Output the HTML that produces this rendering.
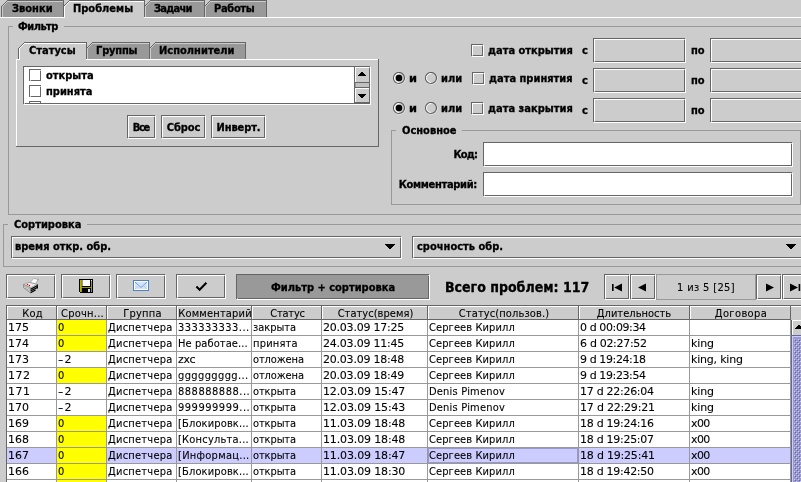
<!DOCTYPE html><html><head><meta charset="utf-8"><title>Проблемы</title><style>html,body{margin:0;padding:0;overflow:hidden;}body{width:801px;height:482px;overflow:hidden;background:#ccc;position:relative;font-family:"DejaVu Sans Condensed","Liberation Sans",sans-serif;font-size:11px;font-weight:bold;color:#000;}.t{position:absolute;white-space:nowrap;overflow:visible;will-change:transform;-webkit-text-stroke:0.3px #000;}.r{position:absolute;}.c{position:absolute;white-space:nowrap;overflow:hidden;will-change:transform;-webkit-text-stroke:0.1px #000;font-weight:normal;font-size:11px;line-height:13px;height:13px;}</style></head><body>
<div class="r" style="left:0px;top:17px;width:801px;height:1px;background:#fff;"></div>
<div class="r" style="left:2px;top:16px;width:265px;height:1px;background:#8a8a8a;"></div>
<svg class="r" style="left:0px;top:0px" width="268" height="18" viewBox="0 0 268 18" shape-rendering="crispEdges"><polygon points="1,7 8,0 64,0 64,17 1,17" fill="#999"/><polygon points="63,7 70,0 145,0 145,17 63,17" fill="#ccc"/><polygon points="144,7 151,0 205,0 205,17 144,17" fill="#999"/><polygon points="204,7 211,0 267,0 267,17 204,17" fill="#999"/><rect x="1" y="6" width="1" height="11" fill="#666"/><rect x="2" y="5" width="1" height="1" fill="#666"/><rect x="3" y="4" width="1" height="1" fill="#666"/><rect x="4" y="3" width="1" height="1" fill="#666"/><rect x="5" y="2" width="1" height="1" fill="#666"/><rect x="6" y="1" width="1" height="1" fill="#666"/><rect x="7" y="0" width="1" height="1" fill="#666"/><rect x="8" y="0" width="56" height="1" fill="#666"/><rect x="63" y="0" width="1" height="17" fill="#666"/><rect x="2" y="6" width="1" height="11" fill="#ccc"/><rect x="3" y="5" width="1" height="1" fill="#ccc"/><rect x="4" y="4" width="1" height="1" fill="#ccc"/><rect x="5" y="3" width="1" height="1" fill="#ccc"/><rect x="6" y="2" width="1" height="1" fill="#ccc"/><rect x="7" y="1" width="1" height="1" fill="#ccc"/><rect x="8" y="1" width="55" height="1" fill="#ccc"/><rect x="63" y="6" width="1" height="11" fill="#666"/><rect x="64" y="5" width="1" height="1" fill="#666"/><rect x="65" y="4" width="1" height="1" fill="#666"/><rect x="66" y="3" width="1" height="1" fill="#666"/><rect x="67" y="2" width="1" height="1" fill="#666"/><rect x="68" y="1" width="1" height="1" fill="#666"/><rect x="69" y="0" width="1" height="1" fill="#666"/><rect x="70" y="0" width="75" height="1" fill="#666"/><rect x="144" y="0" width="1" height="17" fill="#666"/><rect x="64" y="6" width="1" height="11" fill="#fff"/><rect x="65" y="5" width="1" height="1" fill="#fff"/><rect x="66" y="4" width="1" height="1" fill="#fff"/><rect x="67" y="3" width="1" height="1" fill="#fff"/><rect x="68" y="2" width="1" height="1" fill="#fff"/><rect x="69" y="1" width="1" height="1" fill="#fff"/><rect x="70" y="1" width="74" height="1" fill="#fff"/><rect x="144" y="6" width="1" height="11" fill="#666"/><rect x="145" y="5" width="1" height="1" fill="#666"/><rect x="146" y="4" width="1" height="1" fill="#666"/><rect x="147" y="3" width="1" height="1" fill="#666"/><rect x="148" y="2" width="1" height="1" fill="#666"/><rect x="149" y="1" width="1" height="1" fill="#666"/><rect x="150" y="0" width="1" height="1" fill="#666"/><rect x="151" y="0" width="54" height="1" fill="#666"/><rect x="204" y="0" width="1" height="17" fill="#666"/><rect x="145" y="6" width="1" height="11" fill="#ccc"/><rect x="146" y="5" width="1" height="1" fill="#ccc"/><rect x="147" y="4" width="1" height="1" fill="#ccc"/><rect x="148" y="3" width="1" height="1" fill="#ccc"/><rect x="149" y="2" width="1" height="1" fill="#ccc"/><rect x="150" y="1" width="1" height="1" fill="#ccc"/><rect x="151" y="1" width="53" height="1" fill="#ccc"/><rect x="204" y="6" width="1" height="11" fill="#666"/><rect x="205" y="5" width="1" height="1" fill="#666"/><rect x="206" y="4" width="1" height="1" fill="#666"/><rect x="207" y="3" width="1" height="1" fill="#666"/><rect x="208" y="2" width="1" height="1" fill="#666"/><rect x="209" y="1" width="1" height="1" fill="#666"/><rect x="210" y="0" width="1" height="1" fill="#666"/><rect x="211" y="0" width="56" height="1" fill="#666"/><rect x="266" y="0" width="1" height="17" fill="#666"/><rect x="205" y="6" width="1" height="11" fill="#ccc"/><rect x="206" y="5" width="1" height="1" fill="#ccc"/><rect x="207" y="4" width="1" height="1" fill="#ccc"/><rect x="208" y="3" width="1" height="1" fill="#ccc"/><rect x="209" y="2" width="1" height="1" fill="#ccc"/><rect x="210" y="1" width="1" height="1" fill="#ccc"/><rect x="211" y="1" width="55" height="1" fill="#ccc"/></svg>
<div class="t" style="left:12px;top:2px;font-size:11px;line-height:13px;height:13px;">Звонки</div>
<div class="t" style="left:73px;top:2px;font-size:11px;line-height:13px;height:13px;">Проблемы</div>
<div class="t" style="left:154px;top:2px;font-size:11px;line-height:13px;height:13px;letter-spacing:-0.71px;">Задачи</div>
<div class="t" style="left:214px;top:2px;font-size:11px;line-height:13px;height:13px;letter-spacing:-0.32px;">Работы</div>
<div class="r" style="left:64px;top:16px;width:80px;height:2px;background:#ccc;"></div>
<div class="r" style="left:64px;top:6px;width:1px;height:12px;background:#fff;"></div>
<div class="r" style="left:8px;top:26px;width:803px;height:189px;box-sizing:border-box;border:1px solid #999;"></div>
<div class="r" style="left:13px;top:26px;width:51px;height:1px;background:#ccc;"></div>
<div class="t" style="left:18px;top:20px;font-size:11px;line-height:13px;height:13px;letter-spacing:-0.54px;">Фильтр</div>
<div class="r" style="left:16px;top:59px;width:363px;height:1px;background:#fff;"></div>
<div class="r" style="left:16px;top:59px;width:1px;height:88px;background:#fff;"></div>
<div class="r" style="left:378px;top:59px;width:1px;height:88px;background:#666;"></div>
<div class="r" style="left:16px;top:146px;width:363px;height:1px;background:#666;"></div>
<svg class="r" style="left:17px;top:42px" width="230" height="18" viewBox="17 42 230 18" shape-rendering="crispEdges"><polygon points="18,49 25,42 87,42 87,59 18,59" fill="#ccc"/><polygon points="86,49 93,42 150,42 150,59 86,59" fill="#999"/><polygon points="149,49 156,42 246,42 246,59 149,59" fill="#999"/><rect x="18" y="48" width="1" height="11" fill="#666"/><rect x="19" y="47" width="1" height="1" fill="#666"/><rect x="20" y="46" width="1" height="1" fill="#666"/><rect x="21" y="45" width="1" height="1" fill="#666"/><rect x="22" y="44" width="1" height="1" fill="#666"/><rect x="23" y="43" width="1" height="1" fill="#666"/><rect x="24" y="42" width="1" height="1" fill="#666"/><rect x="25" y="42" width="62" height="1" fill="#666"/><rect x="86" y="42" width="1" height="17" fill="#666"/><rect x="19" y="48" width="1" height="11" fill="#fff"/><rect x="20" y="47" width="1" height="1" fill="#fff"/><rect x="21" y="46" width="1" height="1" fill="#fff"/><rect x="22" y="45" width="1" height="1" fill="#fff"/><rect x="23" y="44" width="1" height="1" fill="#fff"/><rect x="24" y="43" width="1" height="1" fill="#fff"/><rect x="25" y="43" width="61" height="1" fill="#fff"/><rect x="86" y="48" width="1" height="11" fill="#666"/><rect x="87" y="47" width="1" height="1" fill="#666"/><rect x="88" y="46" width="1" height="1" fill="#666"/><rect x="89" y="45" width="1" height="1" fill="#666"/><rect x="90" y="44" width="1" height="1" fill="#666"/><rect x="91" y="43" width="1" height="1" fill="#666"/><rect x="92" y="42" width="1" height="1" fill="#666"/><rect x="93" y="42" width="57" height="1" fill="#666"/><rect x="149" y="42" width="1" height="17" fill="#666"/><rect x="87" y="48" width="1" height="11" fill="#ccc"/><rect x="88" y="47" width="1" height="1" fill="#ccc"/><rect x="89" y="46" width="1" height="1" fill="#ccc"/><rect x="90" y="45" width="1" height="1" fill="#ccc"/><rect x="91" y="44" width="1" height="1" fill="#ccc"/><rect x="92" y="43" width="1" height="1" fill="#ccc"/><rect x="93" y="43" width="56" height="1" fill="#ccc"/><rect x="149" y="48" width="1" height="11" fill="#666"/><rect x="150" y="47" width="1" height="1" fill="#666"/><rect x="151" y="46" width="1" height="1" fill="#666"/><rect x="152" y="45" width="1" height="1" fill="#666"/><rect x="153" y="44" width="1" height="1" fill="#666"/><rect x="154" y="43" width="1" height="1" fill="#666"/><rect x="155" y="42" width="1" height="1" fill="#666"/><rect x="156" y="42" width="90" height="1" fill="#666"/><rect x="245" y="42" width="1" height="17" fill="#666"/><rect x="150" y="48" width="1" height="11" fill="#ccc"/><rect x="151" y="47" width="1" height="1" fill="#ccc"/><rect x="152" y="46" width="1" height="1" fill="#ccc"/><rect x="153" y="45" width="1" height="1" fill="#ccc"/><rect x="154" y="44" width="1" height="1" fill="#ccc"/><rect x="155" y="43" width="1" height="1" fill="#ccc"/><rect x="156" y="43" width="89" height="1" fill="#ccc"/></svg>
<div class="t" style="left:29px;top:44px;font-size:11px;line-height:13px;height:13px;">Статусы</div>
<div class="t" style="left:96px;top:44px;font-size:11px;line-height:13px;height:13px;letter-spacing:-0.18px;">Группы</div>
<div class="t" style="left:159px;top:44px;font-size:11px;line-height:13px;height:13px;letter-spacing:0.01px;">Исполнители</div>
<div class="r" style="left:20px;top:58px;width:66px;height:2px;background:#ccc;"></div>
<div class="r" style="left:19px;top:48px;width:1px;height:12px;background:#fff;"></div>
<div class="r" style="left:18px;top:59px;width:1px;height:1px;background:#fff;"></div>
<div class="r" style="left:23px;top:66px;width:347px;height:38px;box-sizing:border-box;border:1px solid #666;background:#fff;box-shadow:inset 1px 1px 0 #fff,1px 1px 0 #fff;"></div>
<div class="r" style="left:24px;top:103px;width:1px;height:1px;background:#ccc"></div><div class="r" style="left:369px;top:67px;width:1px;height:1px;background:#ccc"></div>
<div class="r" style="left:29px;top:69px;width:12px;height:12px;box-sizing:border-box;border:1px solid #666;background:#fff;box-shadow:inset 1px 1px 0 #fff,1px 1px 0 #fff;"></div>
<div class="r" style="left:30px;top:80px;width:1px;height:1px;background:#ccc"></div><div class="r" style="left:40px;top:70px;width:1px;height:1px;background:#ccc"></div>
<div class="t" style="left:46px;top:69px;font-size:11px;line-height:13px;height:13px;">открыта</div>
<div class="r" style="left:29px;top:85px;width:12px;height:12px;box-sizing:border-box;border:1px solid #666;background:#fff;box-shadow:inset 1px 1px 0 #fff,1px 1px 0 #fff;"></div>
<div class="r" style="left:30px;top:96px;width:1px;height:1px;background:#ccc"></div><div class="r" style="left:40px;top:86px;width:1px;height:1px;background:#ccc"></div>
<div class="t" style="left:46px;top:85px;font-size:11px;line-height:13px;height:13px;">принята</div>
<div class="r" style="left:29px;top:101px;width:12px;height:1px;background:#666;"></div>
<div class="r" style="left:29px;top:102px;width:1px;height:1px;background:#666;"></div>
<div class="r" style="left:40px;top:102px;width:1px;height:1px;background:#666;"></div>
<div class="r" style="left:355px;top:67px;width:14px;height:36px;background:#ccc;"></div>
<div class="r" style="left:354px;top:67px;width:1px;height:36px;background:#666;"></div>
<div class="r" style="left:355px;top:67px;width:14px;height:1px;background:#fff;"></div>
<div class="r" style="left:355px;top:67px;width:1px;height:15px;background:#fff;"></div>
<svg class="r" style="left:358px;top:72px" width="8" height="4" viewBox="0 0 8 4" shape-rendering="crispEdges"><rect x="3" y="0" width="2" height="1"/><rect x="2" y="1" width="4" height="1"/><rect x="1" y="2" width="6" height="1"/><rect x="0" y="3" width="8" height="1"/></svg>
<div class="r" style="left:355px;top:82px;width:14px;height:1px;background:#666;"></div>
<div class="r" style="left:355px;top:83px;width:14px;height:4px;background:#c0c0c0;"></div>
<div class="r" style="left:355px;top:83px;width:1px;height:4px;background:#999;"></div>
<div class="r" style="left:355px;top:87px;width:14px;height:1px;background:#666;"></div>
<div class="r" style="left:355px;top:88px;width:14px;height:1px;background:#fff;"></div>
<div class="r" style="left:355px;top:88px;width:1px;height:15px;background:#fff;"></div>
<svg class="r" style="left:358px;top:94px" width="8" height="4" viewBox="0 0 8 4" shape-rendering="crispEdges"><rect x="0" y="0" width="8" height="1"/><rect x="1" y="1" width="6" height="1"/><rect x="2" y="2" width="4" height="1"/><rect x="3" y="3" width="2" height="1"/></svg>
<div class="r" style="left:355px;top:102px;width:14px;height:1px;background:#666;"></div>
<div class="r" style="left:127px;top:115px;width:28px;height:23px;box-sizing:border-box;border:1px solid #666;background:#ccc;box-shadow:inset 1px 1px 0 #fff,1px 1px 0 #fff;"></div>
<div class="r" style="left:128px;top:137px;width:1px;height:1px;background:#ccc"></div><div class="r" style="left:154px;top:116px;width:1px;height:1px;background:#ccc"></div>
<div class="t" style="left:127px;top:121px;font-size:11px;line-height:13px;height:13px;width:29px;text-align:center;letter-spacing:-1.25px;text-indent:-1.25px;">Все</div>
<div class="r" style="left:161px;top:115px;width:44px;height:23px;box-sizing:border-box;border:1px solid #666;background:#ccc;box-shadow:inset 1px 1px 0 #fff,1px 1px 0 #fff;"></div>
<div class="r" style="left:162px;top:137px;width:1px;height:1px;background:#ccc"></div><div class="r" style="left:204px;top:116px;width:1px;height:1px;background:#ccc"></div>
<div class="t" style="left:161px;top:121px;font-size:11px;line-height:13px;height:13px;width:45px;text-align:center;letter-spacing:-0.09px;text-indent:-0.09px;">Сброс</div>
<div class="r" style="left:211px;top:115px;width:54px;height:23px;box-sizing:border-box;border:1px solid #666;background:#ccc;box-shadow:inset 1px 1px 0 #fff,1px 1px 0 #fff;"></div>
<div class="r" style="left:212px;top:137px;width:1px;height:1px;background:#ccc"></div><div class="r" style="left:264px;top:116px;width:1px;height:1px;background:#ccc"></div>
<div class="t" style="left:211px;top:121px;font-size:11px;line-height:13px;height:13px;width:55px;text-align:center;letter-spacing:-0.09px;text-indent:-0.09px;">Инверт.</div>
<div class="r" style="left:471px;top:44px;width:12px;height:12px;box-sizing:border-box;border:1px solid #666;background:#ccc;box-shadow:inset 1px 1px 0 #fff,1px 1px 0 #fff;"></div>
<div class="r" style="left:472px;top:55px;width:1px;height:1px;background:#ccc"></div><div class="r" style="left:482px;top:45px;width:1px;height:1px;background:#ccc"></div>
<div class="t" style="left:488px;top:44px;font-size:11px;line-height:13px;height:13px;">дата открытия</div>
<div class="t" style="left:582px;top:44px;font-size:11px;line-height:13px;height:13px;">с</div>
<div class="t" style="left:691px;top:44px;font-size:11px;line-height:13px;height:13px;">по</div>
<div class="r" style="left:593px;top:38px;width:92px;height:24px;box-sizing:border-box;border:1px solid #666;background:#ccc;box-shadow:inset 1px 1px 0 #fff,1px 1px 0 #fff;"></div>
<div class="r" style="left:594px;top:61px;width:1px;height:1px;background:#ccc"></div><div class="r" style="left:684px;top:39px;width:1px;height:1px;background:#ccc"></div>
<div class="r" style="left:710px;top:38px;width:99px;height:24px;box-sizing:border-box;border:1px solid #666;background:#ccc;box-shadow:inset 1px 1px 0 #fff,1px 1px 0 #fff;"></div>
<div class="r" style="left:711px;top:61px;width:1px;height:1px;background:#ccc"></div><div class="r" style="left:808px;top:39px;width:1px;height:1px;background:#ccc"></div>
<div class="r" style="left:472px;top:72px;width:12px;height:12px;box-sizing:border-box;border:1px solid #666;background:#ccc;box-shadow:inset 1px 1px 0 #fff,1px 1px 0 #fff;"></div>
<div class="r" style="left:473px;top:83px;width:1px;height:1px;background:#ccc"></div><div class="r" style="left:483px;top:73px;width:1px;height:1px;background:#ccc"></div>
<div class="t" style="left:489px;top:72px;font-size:11px;line-height:13px;height:13px;">дата принятия</div>
<div class="t" style="left:582px;top:74px;font-size:11px;line-height:13px;height:13px;">с</div>
<div class="t" style="left:691px;top:74px;font-size:11px;line-height:13px;height:13px;">по</div>
<div class="r" style="left:593px;top:68px;width:92px;height:24px;box-sizing:border-box;border:1px solid #666;background:#ccc;box-shadow:inset 1px 1px 0 #fff,1px 1px 0 #fff;"></div>
<div class="r" style="left:594px;top:91px;width:1px;height:1px;background:#ccc"></div><div class="r" style="left:684px;top:69px;width:1px;height:1px;background:#ccc"></div>
<div class="r" style="left:710px;top:68px;width:99px;height:24px;box-sizing:border-box;border:1px solid #666;background:#ccc;box-shadow:inset 1px 1px 0 #fff,1px 1px 0 #fff;"></div>
<div class="r" style="left:711px;top:91px;width:1px;height:1px;background:#ccc"></div><div class="r" style="left:808px;top:69px;width:1px;height:1px;background:#ccc"></div>
<svg class="r" style="left:393px;top:72px" width="14" height="14" viewBox="0 0 14 14"><circle cx="6.5" cy="6.5" r="5.5" fill="none" stroke="#fff" stroke-width="1"/><circle cx="6" cy="6" r="5.5" fill="#ccc" stroke="#5a5a5a" stroke-width="1.15"/><circle cx="6" cy="6" r="4.5" fill="none" stroke="#fff" stroke-width="1" stroke-dasharray="14.2 14.2" stroke-dashoffset="-7" /><circle cx="6" cy="6" r="3.25" fill="#000"/></svg>
<div class="t" style="left:409px;top:72px;font-size:11px;line-height:13px;height:13px;letter-spacing:0;transform:scaleX(1.15);transform-origin:left;">и</div>
<svg class="r" style="left:425px;top:72px" width="14" height="14" viewBox="0 0 14 14"><circle cx="6.5" cy="6.5" r="5.5" fill="none" stroke="#fff" stroke-width="1"/><circle cx="6" cy="6" r="5.5" fill="#ccc" stroke="#5a5a5a" stroke-width="1.15"/><circle cx="6" cy="6" r="4.5" fill="none" stroke="#fff" stroke-width="1" stroke-dasharray="14.2 14.2" stroke-dashoffset="-7" /></svg>
<div class="t" style="left:441px;top:72px;font-size:11px;line-height:13px;height:13px;">или</div>
<div class="r" style="left:471px;top:102px;width:12px;height:12px;box-sizing:border-box;border:1px solid #666;background:#ccc;box-shadow:inset 1px 1px 0 #fff,1px 1px 0 #fff;"></div>
<div class="r" style="left:472px;top:113px;width:1px;height:1px;background:#ccc"></div><div class="r" style="left:482px;top:103px;width:1px;height:1px;background:#ccc"></div>
<div class="t" style="left:488px;top:102px;font-size:11px;line-height:13px;height:13px;">дата закрытия</div>
<div class="t" style="left:582px;top:104px;font-size:11px;line-height:13px;height:13px;">с</div>
<div class="t" style="left:691px;top:104px;font-size:11px;line-height:13px;height:13px;">по</div>
<div class="r" style="left:593px;top:98px;width:92px;height:24px;box-sizing:border-box;border:1px solid #666;background:#ccc;box-shadow:inset 1px 1px 0 #fff,1px 1px 0 #fff;"></div>
<div class="r" style="left:594px;top:121px;width:1px;height:1px;background:#ccc"></div><div class="r" style="left:684px;top:99px;width:1px;height:1px;background:#ccc"></div>
<div class="r" style="left:710px;top:98px;width:99px;height:24px;box-sizing:border-box;border:1px solid #666;background:#ccc;box-shadow:inset 1px 1px 0 #fff,1px 1px 0 #fff;"></div>
<div class="r" style="left:711px;top:121px;width:1px;height:1px;background:#ccc"></div><div class="r" style="left:808px;top:99px;width:1px;height:1px;background:#ccc"></div>
<svg class="r" style="left:393px;top:102px" width="14" height="14" viewBox="0 0 14 14"><circle cx="6.5" cy="6.5" r="5.5" fill="none" stroke="#fff" stroke-width="1"/><circle cx="6" cy="6" r="5.5" fill="#ccc" stroke="#5a5a5a" stroke-width="1.15"/><circle cx="6" cy="6" r="4.5" fill="none" stroke="#fff" stroke-width="1" stroke-dasharray="14.2 14.2" stroke-dashoffset="-7" /><circle cx="6" cy="6" r="3.25" fill="#000"/></svg>
<div class="t" style="left:409px;top:102px;font-size:11px;line-height:13px;height:13px;letter-spacing:0;transform:scaleX(1.15);transform-origin:left;">и</div>
<svg class="r" style="left:425px;top:102px" width="14" height="14" viewBox="0 0 14 14"><circle cx="6.5" cy="6.5" r="5.5" fill="none" stroke="#fff" stroke-width="1"/><circle cx="6" cy="6" r="5.5" fill="#ccc" stroke="#5a5a5a" stroke-width="1.15"/><circle cx="6" cy="6" r="4.5" fill="none" stroke="#fff" stroke-width="1" stroke-dasharray="14.2 14.2" stroke-dashoffset="-7" /></svg>
<div class="t" style="left:441px;top:102px;font-size:11px;line-height:13px;height:13px;">или</div>
<div class="r" style="left:391px;top:130px;width:410px;height:75px;box-sizing:border-box;border:1px solid #999;"></div>
<div class="r" style="left:396px;top:130px;width:66px;height:1px;background:#ccc;"></div>
<div class="t" style="left:402px;top:124px;font-size:11px;line-height:13px;height:13px;">Основное</div>
<div class="t" style="left:380px;top:148px;font-size:11px;line-height:13px;height:13px;width:97px;text-align:right;letter-spacing:-0.86px;">Код:</div>
<div class="t" style="left:380px;top:178px;font-size:11px;line-height:13px;height:13px;width:97px;text-align:right;letter-spacing:-0.3px;">Комментарий:</div>
<div class="r" style="left:483px;top:142px;width:309px;height:24px;box-sizing:border-box;border:1px solid #666;background:#fff;box-shadow:inset 1px 1px 0 #fff,1px 1px 0 #fff;"></div>
<div class="r" style="left:484px;top:165px;width:1px;height:1px;background:#ccc"></div><div class="r" style="left:791px;top:143px;width:1px;height:1px;background:#ccc"></div>
<div class="r" style="left:483px;top:172px;width:309px;height:24px;box-sizing:border-box;border:1px solid #666;background:#fff;box-shadow:inset 1px 1px 0 #fff,1px 1px 0 #fff;"></div>
<div class="r" style="left:484px;top:195px;width:1px;height:1px;background:#ccc"></div><div class="r" style="left:791px;top:173px;width:1px;height:1px;background:#ccc"></div>
<div class="r" style="left:3px;top:224px;width:808px;height:43px;box-sizing:border-box;border:1px solid #999;"></div>
<div class="r" style="left:8px;top:224px;width:79px;height:1px;background:#ccc;"></div>
<div class="t" style="left:14px;top:218px;font-size:11px;line-height:13px;height:13px;">Сортировка</div>
<div class="r" style="left:11px;top:236px;width:390px;height:22px;box-sizing:border-box;border:1px solid #666;background:#ccc;box-shadow:inset 1px 1px 0 #fff,1px 1px 0 #fff;"></div>
<div class="r" style="left:12px;top:257px;width:1px;height:1px;background:#ccc"></div><div class="r" style="left:400px;top:237px;width:1px;height:1px;background:#ccc"></div>
<div class="t" style="left:15px;top:240px;font-size:11px;line-height:13px;height:13px;">время откр. обр.</div>
<svg class="r" style="left:385px;top:244px" width="10" height="5" viewBox="0 0 10 5" shape-rendering="crispEdges"><rect x="0" y="0" width="10" height="1"/><rect x="1" y="1" width="8" height="1"/><rect x="2" y="2" width="6" height="1"/><rect x="3" y="3" width="4" height="1"/><rect x="4" y="4" width="2" height="1"/></svg>
<div class="r" style="left:412px;top:236px;width:390px;height:22px;box-sizing:border-box;border:1px solid #666;background:#ccc;box-shadow:inset 1px 1px 0 #fff,1px 1px 0 #fff;"></div>
<div class="r" style="left:413px;top:257px;width:1px;height:1px;background:#ccc"></div><div class="r" style="left:801px;top:237px;width:1px;height:1px;background:#ccc"></div>
<div class="t" style="left:417px;top:240px;font-size:11px;line-height:13px;height:13px;">срочность обр.</div>
<svg class="r" style="left:786px;top:244px" width="10" height="5" viewBox="0 0 10 5" shape-rendering="crispEdges"><rect x="0" y="0" width="10" height="1"/><rect x="1" y="1" width="8" height="1"/><rect x="2" y="2" width="6" height="1"/><rect x="3" y="3" width="4" height="1"/><rect x="4" y="4" width="2" height="1"/></svg>
<div class="r" style="left:6px;top:274px;width:49px;height:24px;box-sizing:border-box;border:1px solid #666;background:#ccc;box-shadow:inset 1px 1px 0 #fff,1px 1px 0 #fff;"></div>
<div class="r" style="left:7px;top:297px;width:1px;height:1px;background:#ccc"></div><div class="r" style="left:54px;top:275px;width:1px;height:1px;background:#ccc"></div>
<div class="r" style="left:61px;top:274px;width:49px;height:24px;box-sizing:border-box;border:1px solid #666;background:#ccc;box-shadow:inset 1px 1px 0 #fff,1px 1px 0 #fff;"></div>
<div class="r" style="left:62px;top:297px;width:1px;height:1px;background:#ccc"></div><div class="r" style="left:109px;top:275px;width:1px;height:1px;background:#ccc"></div>
<div class="r" style="left:116px;top:274px;width:49px;height:24px;box-sizing:border-box;border:1px solid #666;background:#ccc;box-shadow:inset 1px 1px 0 #fff,1px 1px 0 #fff;"></div>
<div class="r" style="left:117px;top:297px;width:1px;height:1px;background:#ccc"></div><div class="r" style="left:164px;top:275px;width:1px;height:1px;background:#ccc"></div>
<div class="r" style="left:176px;top:274px;width:49px;height:24px;box-sizing:border-box;border:1px solid #666;background:#ccc;box-shadow:inset 1px 1px 0 #fff,1px 1px 0 #fff;"></div>
<div class="r" style="left:177px;top:297px;width:1px;height:1px;background:#ccc"></div><div class="r" style="left:224px;top:275px;width:1px;height:1px;background:#ccc"></div>
<div class="r" style="left:236px;top:274px;width:193px;height:25px;box-sizing:border-box;border:1px solid #666;background:#999;box-shadow:1px 1px 0 #fff;"></div>
<div class="r" style="left:237px;top:298px;width:1px;height:1px;background:#ccc"></div><div class="r" style="left:428px;top:275px;width:1px;height:1px;background:#ccc"></div>
<div class="t" style="left:236px;top:281px;font-size:11px;line-height:13px;height:13px;width:194px;text-align:center;">Фильтр + сортировка</div>
<div class="t" style="left:445px;top:279px;font-size:14px;line-height:17px;height:17px;">Всего проблем: 117</div>
<div class="r" style="left:604px;top:274px;width:25px;height:25px;box-sizing:border-box;border:1px solid #666;background:#ccc;box-shadow:inset 1px 1px 0 #fff,1px 1px 0 #fff;"></div>
<div class="r" style="left:605px;top:298px;width:1px;height:1px;background:#ccc"></div><div class="r" style="left:628px;top:275px;width:1px;height:1px;background:#ccc"></div>
<div class="r" style="left:630px;top:274px;width:25px;height:25px;box-sizing:border-box;border:1px solid #666;background:#ccc;box-shadow:inset 1px 1px 0 #fff,1px 1px 0 #fff;"></div>
<div class="r" style="left:631px;top:298px;width:1px;height:1px;background:#ccc"></div><div class="r" style="left:654px;top:275px;width:1px;height:1px;background:#ccc"></div>
<svg class="r" style="left:23px;top:278px" width="16" height="16" viewBox="0 0 16 16"><polygon points="7.1,4.6 10.7,0.5 15.6,1.4 12.3,5.6" fill="#fff" stroke="#9a9a9a" stroke-width=".7"/><polygon points="14,1.2 15.7,1.4 14.4,3" fill="#999"/><polygon points="0.5,6.5 6.1,4.4 14.3,6.4 7.4,9.7" fill="#e6eeee" stroke="#8a8a8a" stroke-width=".6"/><polygon points="0.5,6.5 7.4,9.7 7.4,14.9 0.5,9.7" fill="#dcdcdc" stroke="#777" stroke-width=".7"/><path d="M0.8,8 L7.2,11.3 M1.6,9.9 L7.2,13" stroke="#999" stroke-width=".7" fill="none"/><polygon points="7.4,9.7 14.4,6.4 14.4,10.4 7.4,14.9" fill="#b8b8b8"/><path d="M7.6,11.2 L14.2,7.8 M7.6,13 L14.2,9.4 M7.6,14.7 L12.6,12" stroke="#000" stroke-width="1.1" fill="none"/><path d="M14.4,6.4 L14.4,10.6" stroke="#000" stroke-width="1" fill="none"/><circle cx="4.5" cy="6.5" r=".75" fill="#f00"/><circle cx="6.4" cy="7.6" r=".75" fill="#f00"/></svg>
<svg class="r" style="left:79px;top:279px" width="14" height="14" viewBox="0 0 14 14" shape-rendering="crispEdges"><rect width="14" height="14" fill="#000"/><rect x="1" y="1" width="12" height="12" fill="#9a9a00"/><rect x="1" y="1" width="1" height="12" fill="#b4b400"/><rect x="3" y="1" width="9" height="7" fill="#000"/><rect x="3.4" y="1" width="7.6" height="6" fill="#fff" shape-rendering="auto"/><rect x="12" y="1" width="1" height="1" fill="#fff"/><rect x="3" y="9" width="9" height="4" fill="#000"/><rect x="9" y="10" width="2" height="3" fill="#ddd"/><rect x="0" y="13" width="1" height="1" fill="#ddd"/></svg>
<svg class="r" style="left:133px;top:280px" width="16" height="11" viewBox="0 0 16 11"><rect x=".5" y=".5" width="15" height="10" fill="#fff" stroke="#4a80cc"/><rect x="2" y="2" width="12" height="7" fill="#d2e3fa"/><path d="M2,2 L8,7.5 L14,2" fill="none" stroke="#6e9ee2" stroke-width="1"/><path d="M2,9 L6,5.5 M14,9 L10,5.5" fill="none" stroke="#a9c6f0" stroke-width=".8"/></svg>
<svg class="r" style="left:194px;top:280px" width="16" height="13" viewBox="0 0 16 13"><path d="M2.4,6.6 L5.6,9.8 L12.4,2.8" fill="none" stroke="#000" stroke-width="2.1"/></svg>
<svg class="r" style="left:610px;top:282px" width="14" height="11" viewBox="0 0 14 11"><rect x="2" y="2" width="1.6" height="7"/><polygon points="4.2,5.5 12,1.6 12,9.4"/></svg>
<svg class="r" style="left:636px;top:282px" width="14" height="11" viewBox="0 0 14 11"><polygon points="2,5.5 10,1.6 10,9.4"/></svg>
<div class="r" style="left:656px;top:274px;width:100px;height:26px;background:#ccc;box-sizing:border-box;border:1px solid #999;"></div>
<div class="t" style="left:656px;top:281px;font-size:11px;line-height:13px;height:13px;font-weight:normal;-webkit-text-stroke:0.1px #000;width:100px;text-align:center;letter-spacing:0.34px;">1 из 5 [25]</div>
<div class="r" style="left:756px;top:274px;width:25px;height:25px;box-sizing:border-box;border:1px solid #666;background:#ccc;box-shadow:inset 1px 1px 0 #fff,1px 1px 0 #fff;"></div>
<div class="r" style="left:757px;top:298px;width:1px;height:1px;background:#ccc"></div><div class="r" style="left:780px;top:275px;width:1px;height:1px;background:#ccc"></div>
<div class="r" style="left:782px;top:274px;width:25px;height:25px;box-sizing:border-box;border:1px solid #666;background:#ccc;box-shadow:inset 1px 1px 0 #fff,1px 1px 0 #fff;"></div>
<div class="r" style="left:783px;top:298px;width:1px;height:1px;background:#ccc"></div><div class="r" style="left:806px;top:275px;width:1px;height:1px;background:#ccc"></div>
<svg class="r" style="left:762px;top:282px" width="14" height="11" viewBox="0 0 14 11"><polygon points="4,1.6 12,5.5 4,9.4"/></svg>
<svg class="r" style="left:788px;top:282px" width="13" height="11" viewBox="0 0 13 11"><polygon points="2,1.6 10,5.5 2,9.4"/><rect x="10.6" y="2" width="1.6" height="7"/></svg>
<div class="r" style="left:6px;top:305px;width:795px;height:1px;background:#666;"></div>
<div class="r" style="left:6px;top:305px;width:1px;height:177px;background:#666;"></div>
<div class="r" style="left:7px;top:306px;width:794px;height:1px;background:#fff;"></div>
<div class="r" style="left:7px;top:306px;width:1px;height:176px;background:#fff;"></div>
<div class="r" style="left:7px;top:306px;width:50px;height:14px;background:#ccc;box-sizing:border-box;border-right:1px solid #666;border-bottom:1px solid #666;box-shadow:inset 1px 1px 0 #fff;"></div>
<div class="t" style="left:8px;top:307px;font-size:11px;line-height:13px;height:13px;font-weight:normal;-webkit-text-stroke:0.1px #000;width:49px;text-align:center;letter-spacing:0.21px;">Код</div>
<div class="r" style="left:57px;top:306px;width:50px;height:14px;background:#ccc;box-sizing:border-box;border-right:1px solid #666;border-bottom:1px solid #666;box-shadow:inset 1px 1px 0 #fff;"></div>
<div class="t" style="left:58px;top:307px;font-size:11px;line-height:13px;height:13px;font-weight:normal;-webkit-text-stroke:0.1px #000;width:49px;text-align:center;letter-spacing:0.25px;">Срочн...</div>
<div class="r" style="left:107px;top:306px;width:70px;height:14px;background:#ccc;box-sizing:border-box;border-right:1px solid #666;border-bottom:1px solid #666;box-shadow:inset 1px 1px 0 #fff;"></div>
<div class="t" style="left:108px;top:307px;font-size:11px;line-height:13px;height:13px;font-weight:normal;-webkit-text-stroke:0.1px #000;width:69px;text-align:center;letter-spacing:0.18px;">Группа</div>
<div class="r" style="left:177px;top:306px;width:75px;height:14px;background:#ccc;box-sizing:border-box;border-right:1px solid #666;border-bottom:1px solid #666;box-shadow:inset 1px 1px 0 #fff;"></div>
<div class="t" style="left:178px;top:307px;font-size:11px;line-height:13px;height:13px;font-weight:normal;-webkit-text-stroke:0.1px #000;width:74px;text-align:center;letter-spacing:0.19px;">Комментарий</div>
<div class="r" style="left:252px;top:306px;width:70px;height:14px;background:#ccc;box-sizing:border-box;border-right:1px solid #666;border-bottom:1px solid #666;box-shadow:inset 1px 1px 0 #fff;"></div>
<div class="t" style="left:253px;top:307px;font-size:11px;line-height:13px;height:13px;font-weight:normal;-webkit-text-stroke:0.1px #000;width:69px;text-align:center;letter-spacing:-0.19px;">Статус</div>
<div class="r" style="left:322px;top:306px;width:106px;height:14px;background:#ccc;box-sizing:border-box;border-right:1px solid #666;border-bottom:1px solid #666;box-shadow:inset 1px 1px 0 #fff;"></div>
<div class="t" style="left:323px;top:307px;font-size:11px;line-height:13px;height:13px;font-weight:normal;-webkit-text-stroke:0.1px #000;width:105px;text-align:center;letter-spacing:0.04px;">Статус(время)</div>
<div class="r" style="left:428px;top:306px;width:151px;height:14px;background:#ccc;box-sizing:border-box;border-right:1px solid #666;border-bottom:1px solid #666;box-shadow:inset 1px 1px 0 #fff;"></div>
<div class="t" style="left:429px;top:307px;font-size:11px;line-height:13px;height:13px;font-weight:normal;-webkit-text-stroke:0.1px #000;width:150px;text-align:center;letter-spacing:0.12px;">Статус(пользов.)</div>
<div class="r" style="left:579px;top:306px;width:111px;height:14px;background:#ccc;box-sizing:border-box;border-right:1px solid #666;border-bottom:1px solid #666;box-shadow:inset 1px 1px 0 #fff;"></div>
<div class="t" style="left:579px;top:307px;font-size:11px;line-height:13px;height:13px;font-weight:normal;-webkit-text-stroke:0.1px #000;width:110px;text-align:center;letter-spacing:0.03px;">Длительность</div>
<div class="r" style="left:690px;top:306px;width:101px;height:14px;background:#ccc;box-sizing:border-box;border-right:1px solid #666;border-bottom:1px solid #666;box-shadow:inset 1px 1px 0 #fff;"></div>
<div class="t" style="left:691px;top:307px;font-size:11px;line-height:13px;height:13px;font-weight:normal;-webkit-text-stroke:0.1px #000;width:100px;text-align:center;letter-spacing:0.4px;">Договора</div>
<div class="r" style="left:7px;top:320px;width:784px;height:162px;background:#fff;"></div>
<div class="c" style="left:8px;top:321px;width:48px;letter-spacing:0.0px;font-family:'DejaVu Sans','Liberation Sans',sans-serif;">175</div>
<div class="r" style="left:57px;top:320px;width:49px;height:15px;background:#ff0;"></div>
<div class="c" style="left:58px;top:321px;width:48px;">0</div>
<div class="c" style="left:108px;top:321px;width:68px;letter-spacing:0.24px;">Диспетчера</div>
<div class="c" style="left:178px;top:321px;width:73px;letter-spacing:0.46px;">333333333...</div>
<div class="c" style="left:253px;top:321px;width:68px;letter-spacing:-0.03px;">закрыта</div>
<div class="c" style="left:323px;top:321px;width:104px;letter-spacing:-0.22px;font-family:'DejaVu Sans','Liberation Sans',sans-serif;">20.03.09 17:25</div>
<div class="c" style="left:429px;top:321px;width:149px;letter-spacing:0.1px;">Сергеев Кирилл</div>
<div class="c" style="left:580px;top:321px;width:109px;letter-spacing:-0.4px;font-family:'DejaVu Sans','Liberation Sans',sans-serif;">0 d 00:09:34</div>
<div class="r" style="left:7px;top:335px;width:784px;height:1px;background:#999;"></div>
<div class="c" style="left:8px;top:337px;width:48px;letter-spacing:0.0px;font-family:'DejaVu Sans','Liberation Sans',sans-serif;">174</div>
<div class="r" style="left:57px;top:336px;width:49px;height:15px;background:#ff0;"></div>
<div class="c" style="left:58px;top:337px;width:48px;">0</div>
<div class="c" style="left:108px;top:337px;width:68px;letter-spacing:0.24px;">Диспетчера</div>
<div class="c" style="left:178px;top:337px;width:73px;letter-spacing:0.09px;">Не работае...</div>
<div class="c" style="left:253px;top:337px;width:68px;letter-spacing:0.19px;">принята</div>
<div class="c" style="left:323px;top:337px;width:104px;letter-spacing:-0.22px;font-family:'DejaVu Sans','Liberation Sans',sans-serif;">24.03.09 11:45</div>
<div class="c" style="left:429px;top:337px;width:149px;letter-spacing:0.1px;">Сергеев Кирилл</div>
<div class="c" style="left:580px;top:337px;width:109px;letter-spacing:-0.31px;font-family:'DejaVu Sans','Liberation Sans',sans-serif;">6 d 02:27:52</div>
<div class="c" style="left:691px;top:337px;width:99px;letter-spacing:-0.13px;font-family:'DejaVu Sans','Liberation Sans',sans-serif;">king</div>
<div class="r" style="left:7px;top:351px;width:784px;height:1px;background:#999;"></div>
<div class="c" style="left:8px;top:353px;width:48px;letter-spacing:0.0px;font-family:'DejaVu Sans','Liberation Sans',sans-serif;">173</div>
<div class="c" style="left:58px;top:353px;width:48px;letter-spacing:1.63px;font-family:'DejaVu Sans','Liberation Sans',sans-serif;"><span style="display:inline-block;transform:scaleX(1.35);transform-origin:left center;margin-right:1px;">-</span>2</div>
<div class="c" style="left:108px;top:353px;width:68px;letter-spacing:0.24px;">Диспетчера</div>
<div class="c" style="left:178px;top:353px;width:73px;letter-spacing:-0.3px;font-family:'DejaVu Sans','Liberation Sans',sans-serif;">zxc</div>
<div class="c" style="left:253px;top:353px;width:68px;letter-spacing:-0.1px;">отложена</div>
<div class="c" style="left:323px;top:353px;width:104px;letter-spacing:-0.22px;font-family:'DejaVu Sans','Liberation Sans',sans-serif;">20.03.09 18:48</div>
<div class="c" style="left:429px;top:353px;width:149px;letter-spacing:0.1px;">Сергеев Кирилл</div>
<div class="c" style="left:580px;top:353px;width:109px;letter-spacing:-0.4px;font-family:'DejaVu Sans','Liberation Sans',sans-serif;">9 d 19:24:18</div>
<div class="c" style="left:691px;top:353px;width:99px;letter-spacing:-0.2px;font-family:'DejaVu Sans','Liberation Sans',sans-serif;">king, king</div>
<div class="r" style="left:7px;top:367px;width:784px;height:1px;background:#999;"></div>
<div class="c" style="left:8px;top:369px;width:48px;letter-spacing:0.5px;font-family:'DejaVu Sans','Liberation Sans',sans-serif;">172</div>
<div class="r" style="left:57px;top:368px;width:49px;height:15px;background:#ff0;"></div>
<div class="c" style="left:58px;top:369px;width:48px;">0</div>
<div class="c" style="left:108px;top:369px;width:68px;letter-spacing:0.24px;">Диспетчера</div>
<div class="c" style="left:178px;top:369px;width:73px;letter-spacing:0.38px;">ggggggggg...</div>
<div class="c" style="left:253px;top:369px;width:68px;letter-spacing:-0.1px;">отложена</div>
<div class="c" style="left:323px;top:369px;width:104px;letter-spacing:-0.22px;font-family:'DejaVu Sans','Liberation Sans',sans-serif;">20.03.09 18:49</div>
<div class="c" style="left:429px;top:369px;width:149px;letter-spacing:0.1px;">Сергеев Кирилл</div>
<div class="c" style="left:580px;top:369px;width:109px;letter-spacing:-0.4px;font-family:'DejaVu Sans','Liberation Sans',sans-serif;">9 d 19:23:54</div>
<div class="r" style="left:7px;top:383px;width:784px;height:1px;background:#999;"></div>
<div class="c" style="left:8px;top:385px;width:48px;letter-spacing:0.5px;font-family:'DejaVu Sans','Liberation Sans',sans-serif;">171</div>
<div class="c" style="left:58px;top:385px;width:48px;letter-spacing:1.63px;font-family:'DejaVu Sans','Liberation Sans',sans-serif;"><span style="display:inline-block;transform:scaleX(1.35);transform-origin:left center;margin-right:1px;">-</span>2</div>
<div class="c" style="left:108px;top:385px;width:68px;letter-spacing:0.24px;">Диспетчера</div>
<div class="c" style="left:178px;top:385px;width:73px;letter-spacing:0.51px;">888888888...</div>
<div class="c" style="left:253px;top:385px;width:68px;letter-spacing:-0.11px;">открыта</div>
<div class="c" style="left:323px;top:385px;width:104px;letter-spacing:-0.14px;font-family:'DejaVu Sans','Liberation Sans',sans-serif;">12.03.09 15:47</div>
<div class="c" style="left:429px;top:385px;width:149px;letter-spacing:0.2px;">Denis Pimenov</div>
<div class="c" style="left:580px;top:385px;width:109px;letter-spacing:-0.28px;font-family:'DejaVu Sans','Liberation Sans',sans-serif;">17 d 22:26:04</div>
<div class="c" style="left:691px;top:385px;width:99px;letter-spacing:-0.13px;font-family:'DejaVu Sans','Liberation Sans',sans-serif;">king</div>
<div class="r" style="left:7px;top:399px;width:784px;height:1px;background:#999;"></div>
<div class="c" style="left:8px;top:401px;width:48px;letter-spacing:0.0px;font-family:'DejaVu Sans','Liberation Sans',sans-serif;">170</div>
<div class="c" style="left:58px;top:401px;width:48px;letter-spacing:1.63px;font-family:'DejaVu Sans','Liberation Sans',sans-serif;"><span style="display:inline-block;transform:scaleX(1.35);transform-origin:left center;margin-right:1px;">-</span>2</div>
<div class="c" style="left:108px;top:401px;width:68px;letter-spacing:0.24px;">Диспетчера</div>
<div class="c" style="left:178px;top:401px;width:73px;letter-spacing:0.51px;">999999999...</div>
<div class="c" style="left:253px;top:401px;width:68px;letter-spacing:-0.11px;">открыта</div>
<div class="c" style="left:323px;top:401px;width:104px;letter-spacing:-0.14px;font-family:'DejaVu Sans','Liberation Sans',sans-serif;">12.03.09 15:43</div>
<div class="c" style="left:429px;top:401px;width:149px;letter-spacing:0.2px;">Denis Pimenov</div>
<div class="c" style="left:580px;top:401px;width:109px;letter-spacing:-0.2px;font-family:'DejaVu Sans','Liberation Sans',sans-serif;">17 d 22:29:21</div>
<div class="c" style="left:691px;top:401px;width:99px;letter-spacing:-0.13px;font-family:'DejaVu Sans','Liberation Sans',sans-serif;">king</div>
<div class="r" style="left:7px;top:415px;width:784px;height:1px;background:#999;"></div>
<div class="c" style="left:8px;top:417px;width:48px;letter-spacing:0.0px;font-family:'DejaVu Sans','Liberation Sans',sans-serif;">169</div>
<div class="r" style="left:57px;top:416px;width:49px;height:15px;background:#ff0;"></div>
<div class="c" style="left:58px;top:417px;width:48px;">0</div>
<div class="c" style="left:108px;top:417px;width:68px;letter-spacing:0.24px;">Диспетчера</div>
<div class="c" style="left:178px;top:417px;width:73px;letter-spacing:0.14px;">[Блокировк...</div>
<div class="c" style="left:253px;top:417px;width:68px;letter-spacing:-0.11px;">открыта</div>
<div class="c" style="left:323px;top:417px;width:104px;letter-spacing:-0.14px;font-family:'DejaVu Sans','Liberation Sans',sans-serif;">11.03.09 18:48</div>
<div class="c" style="left:429px;top:417px;width:149px;letter-spacing:0.1px;">Сергеев Кирилл</div>
<div class="c" style="left:580px;top:417px;width:109px;letter-spacing:-0.28px;font-family:'DejaVu Sans','Liberation Sans',sans-serif;">18 d 19:24:16</div>
<div class="c" style="left:691px;top:417px;width:99px;letter-spacing:-0.6px;font-family:'DejaVu Sans','Liberation Sans',sans-serif;">x00</div>
<div class="r" style="left:7px;top:431px;width:784px;height:1px;background:#999;"></div>
<div class="c" style="left:8px;top:433px;width:48px;letter-spacing:0.0px;font-family:'DejaVu Sans','Liberation Sans',sans-serif;">168</div>
<div class="r" style="left:57px;top:432px;width:49px;height:15px;background:#ff0;"></div>
<div class="c" style="left:58px;top:433px;width:48px;">0</div>
<div class="c" style="left:108px;top:433px;width:68px;letter-spacing:0.24px;">Диспетчера</div>
<div class="c" style="left:178px;top:433px;width:73px;letter-spacing:0.21px;">[Консульта...</div>
<div class="c" style="left:253px;top:433px;width:68px;letter-spacing:-0.11px;">открыта</div>
<div class="c" style="left:323px;top:433px;width:104px;letter-spacing:-0.14px;font-family:'DejaVu Sans','Liberation Sans',sans-serif;">11.03.09 18:48</div>
<div class="c" style="left:429px;top:433px;width:149px;letter-spacing:0.1px;">Сергеев Кирилл</div>
<div class="c" style="left:580px;top:433px;width:109px;letter-spacing:-0.28px;font-family:'DejaVu Sans','Liberation Sans',sans-serif;">18 d 19:25:07</div>
<div class="c" style="left:691px;top:433px;width:99px;letter-spacing:-0.6px;font-family:'DejaVu Sans','Liberation Sans',sans-serif;">x00</div>
<div class="r" style="left:7px;top:447px;width:784px;height:1px;background:#999;"></div>
<div class="r" style="left:7px;top:448px;width:784px;height:15px;background:#ccf;"></div>
<div class="c" style="left:8px;top:449px;width:48px;letter-spacing:0.0px;font-family:'DejaVu Sans','Liberation Sans',sans-serif;">167</div>
<div class="r" style="left:57px;top:448px;width:49px;height:15px;background:#ff0;"></div>
<div class="c" style="left:58px;top:449px;width:48px;">0</div>
<div class="c" style="left:108px;top:449px;width:68px;letter-spacing:0.24px;">Диспетчера</div>
<div class="c" style="left:178px;top:449px;width:73px;letter-spacing:0.27px;">[Информац...</div>
<div class="c" style="left:253px;top:449px;width:68px;letter-spacing:-0.11px;">открыта</div>
<div class="c" style="left:323px;top:449px;width:104px;letter-spacing:-0.14px;font-family:'DejaVu Sans','Liberation Sans',sans-serif;">11.03.09 18:47</div>
<div class="c" style="left:429px;top:449px;width:149px;letter-spacing:0.1px;">Сергеев Кирилл</div>
<div class="c" style="left:580px;top:449px;width:109px;letter-spacing:-0.2px;font-family:'DejaVu Sans','Liberation Sans',sans-serif;">18 d 19:25:41</div>
<div class="c" style="left:691px;top:449px;width:99px;letter-spacing:-0.6px;font-family:'DejaVu Sans','Liberation Sans',sans-serif;">x00</div>
<div class="r" style="left:7px;top:463px;width:784px;height:1px;background:#999;"></div>
<div class="r" style="left:428px;top:448px;width:150px;height:15px;background:transparent;box-sizing:border-box;border:1px solid #99c;"></div>
<div class="c" style="left:8px;top:465px;width:48px;letter-spacing:0.0px;font-family:'DejaVu Sans','Liberation Sans',sans-serif;">166</div>
<div class="r" style="left:57px;top:464px;width:49px;height:15px;background:#ff0;"></div>
<div class="c" style="left:58px;top:465px;width:48px;">0</div>
<div class="c" style="left:108px;top:465px;width:68px;letter-spacing:0.24px;">Диспетчера</div>
<div class="c" style="left:178px;top:465px;width:73px;letter-spacing:0.14px;">[Блокировк...</div>
<div class="c" style="left:253px;top:465px;width:68px;letter-spacing:-0.11px;">открыта</div>
<div class="c" style="left:323px;top:465px;width:104px;letter-spacing:-0.14px;font-family:'DejaVu Sans','Liberation Sans',sans-serif;">11.03.09 18:30</div>
<div class="c" style="left:429px;top:465px;width:149px;letter-spacing:0.1px;">Сергеев Кирилл</div>
<div class="c" style="left:580px;top:465px;width:109px;letter-spacing:-0.28px;font-family:'DejaVu Sans','Liberation Sans',sans-serif;">18 d 19:42:50</div>
<div class="c" style="left:691px;top:465px;width:99px;letter-spacing:-0.6px;font-family:'DejaVu Sans','Liberation Sans',sans-serif;">x00</div>
<div class="r" style="left:7px;top:479px;width:784px;height:1px;background:#999;"></div>
<div class="r" style="left:57px;top:480px;width:49px;height:15px;background:#ff0;"></div>
<div class="c" style="left:58px;top:481px;width:48px;">0</div>
<div class="r" style="left:7px;top:495px;width:784px;height:1px;background:#999;"></div>
<div class="r" style="left:56px;top:320px;width:1px;height:162px;background:#999;"></div>
<div class="r" style="left:106px;top:320px;width:1px;height:162px;background:#999;"></div>
<div class="r" style="left:176px;top:320px;width:1px;height:162px;background:#999;"></div>
<div class="r" style="left:251px;top:320px;width:1px;height:162px;background:#999;"></div>
<div class="r" style="left:321px;top:320px;width:1px;height:162px;background:#999;"></div>
<div class="r" style="left:427px;top:320px;width:1px;height:162px;background:#999;"></div>
<div class="r" style="left:578px;top:320px;width:1px;height:162px;background:#999;"></div>
<div class="r" style="left:689px;top:320px;width:1px;height:162px;background:#999;"></div>
<div class="r" style="left:790px;top:320px;width:1px;height:162px;background:#999;"></div>
<div class="r" style="left:791px;top:320px;width:1px;height:162px;background:#666;"></div>
<div class="r" style="left:792px;top:320px;width:9px;height:15px;background:#ccc;"></div>
<div class="r" style="left:792px;top:320px;width:1px;height:15px;background:#fff;"></div>
<div class="r" style="left:792px;top:320px;width:9px;height:1px;background:#fff;"></div>
<svg class="r" style="left:795px;top:325px" width="8" height="4" viewBox="0 0 8 4" shape-rendering="crispEdges"><rect x="3" y="0" width="2" height="1"/><rect x="2" y="1" width="4" height="1"/><rect x="1" y="2" width="6" height="1"/><rect x="0" y="3" width="8" height="1"/></svg>
<div class="r" style="left:791px;top:335px;width:10px;height:147px;background:#669;"></div>
<div class="r" style="left:792px;top:336px;width:9px;height:146px;background:#ccf;"></div>
<div class="r" style="left:793px;top:337px;width:8px;height:145px;background:#99c;"></div>
<svg class="r" style="left:794px;top:339px" width="7" height="143" viewBox="0 0 7 143" shape-rendering="crispEdges"><defs><pattern id="bp" width="4" height="4" patternUnits="userSpaceOnUse"><rect x="0" y="0" width="1" height="1" fill="#ccf"/><rect x="2" y="2" width="1" height="1" fill="#ccf"/><rect x="1" y="1" width="1" height="1" fill="#669"/><rect x="3" y="3" width="1" height="1" fill="#669"/></pattern></defs><rect width="7" height="143" fill="url(#bp)"/></svg>
</body></html>
